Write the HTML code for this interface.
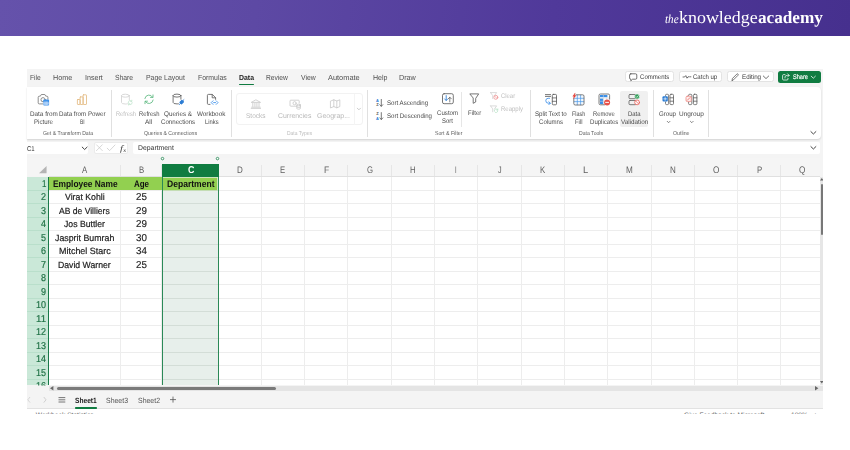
<!DOCTYPE html>
<html lang="en"><head><meta charset="utf-8"><title>Excel Data Validation - The Knowledge Academy</title>
<style>
html,body{margin:0;padding:0;}
body{width:850px;height:450px;position:relative;overflow:hidden;background:#fff;font-family:"Liberation Sans",sans-serif;}
.t{position:absolute;white-space:nowrap;line-height:1;transform-origin:0 0;display:block;text-rendering:geometricPrecision;}
.a{position:absolute;display:block;}
#hdr{left:0;top:0;width:850px;height:36.2px;background:linear-gradient(97deg,#6552ab 0%,#5d49a4 30%,#50399a 65%,#46308e 100%);}
#app{left:27px;top:69px;width:796.5px;height:345px;background:#f4f4f4;overflow:hidden;}
#ribbon{left:27px;top:87.3px;width:794px;height:51.7px;background:#fff;border-radius:0 4px 4px 0;box-shadow:0 1.2px 2px -0.3px rgba(0,0,0,.14);}
.sep{position:absolute;width:1px;background:#e0e0e0;}
.btn{position:absolute;background:#fff;border:0.6px solid #e3e3e3;border-radius:2.5px;box-sizing:border-box;}
svg{position:absolute;overflow:visible;}
#txt{position:absolute;left:0;top:0;width:850px;height:450px;will-change:transform;}

</style></head>
<body>
<div class="a" id="hdr"></div>
<div class="a" id="app"></div>
<div class="a" id="ribbon"></div>
<!-- tab underline -->
<div class="a" style="left:239px;top:83.5px;width:15px;height:1.7px;background:#107c41;border-radius:1px"></div>
<!-- ribbon separators -->
<div class="sep" style="left:111px;top:90px;height:47px"></div>
<div class="sep" style="left:230.5px;top:90px;height:47px"></div>
<div class="sep" style="left:367px;top:90px;height:47px"></div>
<div class="sep" style="left:461px;top:91.5px;height:35px;background:#e6e6e6"></div>
<div class="sep" style="left:529.5px;top:90px;height:47px"></div>
<div class="sep" style="left:652.7px;top:90px;height:47px"></div>
<div class="sep" style="left:708px;top:90px;height:47px"></div>
<!-- data types gallery -->
<div class="a" style="left:235.5px;top:93px;width:127px;height:32px;border:0.7px solid #f2f2f2;border-radius:3px;box-sizing:border-box"></div>
<div class="a" style="left:354px;top:93.5px;width:0.7px;height:31px;background:#f4f4f4"></div>
<!-- data validation hover -->
<div class="a" style="left:620px;top:90.7px;width:28.3px;height:36.6px;background:#f0f0f0;border-radius:2px"></div>
<!-- top right buttons -->
<div class="btn" style="left:625px;top:71.3px;width:48.5px;height:11.2px"></div>
<div class="btn" style="left:678.7px;top:71.3px;width:43.5px;height:11.2px"></div>
<div class="btn" style="left:727px;top:71.3px;width:46.5px;height:11.2px"></div>
<div class="a" style="left:777.8px;top:71px;width:43px;height:11.8px;background:#107c41;border-radius:2.5px"></div>
<!-- formula bar -->
<div class="a" style="left:27px;top:142.1px;width:61.2px;height:11.9px;background:#fff;border-radius:0 2px 2px 0"></div>
<div class="a" style="left:93.6px;top:142.1px;width:34.4px;height:11.9px;background:#fff;border-radius:2px;border:0.5px solid #ebebeb;box-sizing:border-box"></div>
<div class="a" style="left:133.3px;top:142.1px;width:687px;height:11.9px;background:#fff;border-radius:2px"></div>

<div class="a" style="left:48.50px;top:176.90px;width:771.10px;height:208.60px;background:#fff;"></div>
<div class="a" style="left:27.00px;top:157.70px;width:792.60px;height:18.70px;background:#f5f5f5;"></div>
<div class="a" style="left:27.00px;top:176.90px;width:21.50px;height:208.60px;background:#cae8d8;"></div>
<div class="a" style="left:48.50px;top:189.90px;width:771.10px;height:1.00px;background:#ededed;"></div>
<div class="a" style="left:27.00px;top:189.90px;width:21.50px;height:1.00px;background:#b9dfcb;"></div>
<div class="a" style="left:48.50px;top:203.40px;width:771.10px;height:1.00px;background:#ededed;"></div>
<div class="a" style="left:27.00px;top:203.40px;width:21.50px;height:1.00px;background:#b9dfcb;"></div>
<div class="a" style="left:48.50px;top:216.90px;width:771.10px;height:1.00px;background:#ededed;"></div>
<div class="a" style="left:27.00px;top:216.90px;width:21.50px;height:1.00px;background:#b9dfcb;"></div>
<div class="a" style="left:48.50px;top:230.40px;width:771.10px;height:1.00px;background:#ededed;"></div>
<div class="a" style="left:27.00px;top:230.40px;width:21.50px;height:1.00px;background:#b9dfcb;"></div>
<div class="a" style="left:48.50px;top:243.90px;width:771.10px;height:1.00px;background:#ededed;"></div>
<div class="a" style="left:27.00px;top:243.90px;width:21.50px;height:1.00px;background:#b9dfcb;"></div>
<div class="a" style="left:48.50px;top:257.40px;width:771.10px;height:1.00px;background:#ededed;"></div>
<div class="a" style="left:27.00px;top:257.40px;width:21.50px;height:1.00px;background:#b9dfcb;"></div>
<div class="a" style="left:48.50px;top:270.90px;width:771.10px;height:1.00px;background:#ededed;"></div>
<div class="a" style="left:27.00px;top:270.90px;width:21.50px;height:1.00px;background:#b9dfcb;"></div>
<div class="a" style="left:48.50px;top:284.40px;width:771.10px;height:1.00px;background:#ededed;"></div>
<div class="a" style="left:27.00px;top:284.40px;width:21.50px;height:1.00px;background:#b9dfcb;"></div>
<div class="a" style="left:48.50px;top:297.90px;width:771.10px;height:1.00px;background:#ededed;"></div>
<div class="a" style="left:27.00px;top:297.90px;width:21.50px;height:1.00px;background:#b9dfcb;"></div>
<div class="a" style="left:48.50px;top:311.40px;width:771.10px;height:1.00px;background:#ededed;"></div>
<div class="a" style="left:27.00px;top:311.40px;width:21.50px;height:1.00px;background:#b9dfcb;"></div>
<div class="a" style="left:48.50px;top:324.90px;width:771.10px;height:1.00px;background:#ededed;"></div>
<div class="a" style="left:27.00px;top:324.90px;width:21.50px;height:1.00px;background:#b9dfcb;"></div>
<div class="a" style="left:48.50px;top:338.40px;width:771.10px;height:1.00px;background:#ededed;"></div>
<div class="a" style="left:27.00px;top:338.40px;width:21.50px;height:1.00px;background:#b9dfcb;"></div>
<div class="a" style="left:48.50px;top:351.90px;width:771.10px;height:1.00px;background:#ededed;"></div>
<div class="a" style="left:27.00px;top:351.90px;width:21.50px;height:1.00px;background:#b9dfcb;"></div>
<div class="a" style="left:48.50px;top:365.40px;width:771.10px;height:1.00px;background:#ededed;"></div>
<div class="a" style="left:27.00px;top:365.40px;width:21.50px;height:1.00px;background:#b9dfcb;"></div>
<div class="a" style="left:48.50px;top:378.90px;width:771.10px;height:1.00px;background:#ededed;"></div>
<div class="a" style="left:27.00px;top:378.90px;width:21.50px;height:1.00px;background:#b9dfcb;"></div>
<div class="a" style="left:120.00px;top:176.90px;width:1.00px;height:208.60px;background:#ededed;"></div>
<div class="a" style="left:120.00px;top:165.20px;width:1.00px;height:11.20px;background:#e6e6e6;"></div>
<div class="a" style="left:161.20px;top:176.90px;width:1.00px;height:208.60px;background:#ededed;"></div>
<div class="a" style="left:161.20px;top:165.20px;width:1.00px;height:11.20px;background:#e6e6e6;"></div>
<div class="a" style="left:218.10px;top:176.90px;width:1.00px;height:208.60px;background:#ededed;"></div>
<div class="a" style="left:218.10px;top:165.20px;width:1.00px;height:11.20px;background:#e6e6e6;"></div>
<div class="a" style="left:260.80px;top:176.90px;width:1.00px;height:208.60px;background:#ededed;"></div>
<div class="a" style="left:260.80px;top:165.20px;width:1.00px;height:11.20px;background:#e6e6e6;"></div>
<div class="a" style="left:304.10px;top:176.90px;width:1.00px;height:208.60px;background:#ededed;"></div>
<div class="a" style="left:304.10px;top:165.20px;width:1.00px;height:11.20px;background:#e6e6e6;"></div>
<div class="a" style="left:347.40px;top:176.90px;width:1.00px;height:208.60px;background:#ededed;"></div>
<div class="a" style="left:347.40px;top:165.20px;width:1.00px;height:11.20px;background:#e6e6e6;"></div>
<div class="a" style="left:390.70px;top:176.90px;width:1.00px;height:208.60px;background:#ededed;"></div>
<div class="a" style="left:390.70px;top:165.20px;width:1.00px;height:11.20px;background:#e6e6e6;"></div>
<div class="a" style="left:434.00px;top:176.90px;width:1.00px;height:208.60px;background:#ededed;"></div>
<div class="a" style="left:434.00px;top:165.20px;width:1.00px;height:11.20px;background:#e6e6e6;"></div>
<div class="a" style="left:477.30px;top:176.90px;width:1.00px;height:208.60px;background:#ededed;"></div>
<div class="a" style="left:477.30px;top:165.20px;width:1.00px;height:11.20px;background:#e6e6e6;"></div>
<div class="a" style="left:520.60px;top:176.90px;width:1.00px;height:208.60px;background:#ededed;"></div>
<div class="a" style="left:520.60px;top:165.20px;width:1.00px;height:11.20px;background:#e6e6e6;"></div>
<div class="a" style="left:563.90px;top:176.90px;width:1.00px;height:208.60px;background:#ededed;"></div>
<div class="a" style="left:563.90px;top:165.20px;width:1.00px;height:11.20px;background:#e6e6e6;"></div>
<div class="a" style="left:607.20px;top:176.90px;width:1.00px;height:208.60px;background:#ededed;"></div>
<div class="a" style="left:607.20px;top:165.20px;width:1.00px;height:11.20px;background:#e6e6e6;"></div>
<div class="a" style="left:650.50px;top:176.90px;width:1.00px;height:208.60px;background:#ededed;"></div>
<div class="a" style="left:650.50px;top:165.20px;width:1.00px;height:11.20px;background:#e6e6e6;"></div>
<div class="a" style="left:693.80px;top:176.90px;width:1.00px;height:208.60px;background:#ededed;"></div>
<div class="a" style="left:693.80px;top:165.20px;width:1.00px;height:11.20px;background:#e6e6e6;"></div>
<div class="a" style="left:737.10px;top:176.90px;width:1.00px;height:208.60px;background:#ededed;"></div>
<div class="a" style="left:737.10px;top:165.20px;width:1.00px;height:11.20px;background:#e6e6e6;"></div>
<div class="a" style="left:780.40px;top:176.90px;width:1.00px;height:208.60px;background:#ededed;"></div>
<div class="a" style="left:780.40px;top:165.20px;width:1.00px;height:11.20px;background:#e6e6e6;"></div>
<div class="a" style="left:48.50px;top:175.80px;width:771.10px;height:0.90px;background:#e0e0e0;"></div>
<div class="a" style="left:49.30px;top:176.90px;width:112.50px;height:13.20px;background:#92d050;"></div>
<div class="a" style="left:161.70px;top:176.90px;width:57.00px;height:208.60px;background:#e7efeb;"></div>
<div class="a" style="left:162.50px;top:189.90px;width:55.50px;height:1.00px;background:#d3ddd7;"></div>
<div class="a" style="left:162.50px;top:203.40px;width:55.50px;height:1.00px;background:#d3ddd7;"></div>
<div class="a" style="left:162.50px;top:216.90px;width:55.50px;height:1.00px;background:#d3ddd7;"></div>
<div class="a" style="left:162.50px;top:230.40px;width:55.50px;height:1.00px;background:#d3ddd7;"></div>
<div class="a" style="left:162.50px;top:243.90px;width:55.50px;height:1.00px;background:#d3ddd7;"></div>
<div class="a" style="left:162.50px;top:257.40px;width:55.50px;height:1.00px;background:#d3ddd7;"></div>
<div class="a" style="left:162.50px;top:270.90px;width:55.50px;height:1.00px;background:#d3ddd7;"></div>
<div class="a" style="left:162.50px;top:284.40px;width:55.50px;height:1.00px;background:#d3ddd7;"></div>
<div class="a" style="left:162.50px;top:297.90px;width:55.50px;height:1.00px;background:#d3ddd7;"></div>
<div class="a" style="left:162.50px;top:311.40px;width:55.50px;height:1.00px;background:#d3ddd7;"></div>
<div class="a" style="left:162.50px;top:324.90px;width:55.50px;height:1.00px;background:#d3ddd7;"></div>
<div class="a" style="left:162.50px;top:338.40px;width:55.50px;height:1.00px;background:#d3ddd7;"></div>
<div class="a" style="left:162.50px;top:351.90px;width:55.50px;height:1.00px;background:#d3ddd7;"></div>
<div class="a" style="left:162.50px;top:365.40px;width:55.50px;height:1.00px;background:#d3ddd7;"></div>
<div class="a" style="left:162.50px;top:378.90px;width:55.50px;height:1.00px;background:#d3ddd7;"></div>
<div class="a" style="left:163.20px;top:177.70px;width:54.30px;height:12.10px;background:#92d050;box-shadow:0 0 0 0.6px #b9dda0;"></div>
<div class="a" style="left:161.70px;top:164.00px;width:57.00px;height:13.10px;background:#107c41;"></div>
<div class="a" style="left:161.70px;top:176.60px;width:1.40px;height:208.90px;background:#2a8957;"></div>
<div class="a" style="left:217.50px;top:176.60px;width:1.40px;height:208.90px;background:#2a8957;"></div>
<div class="a" style="left:47.90px;top:176.90px;width:1.30px;height:208.60px;background:#1a7a4a;"></div>
<svg style="left:158px;top:155px" width="64" height="8" viewBox="158 155 64 8"><circle cx="162.5" cy="158.6" r="1.25" fill="#fff" stroke="#2e8b5a" stroke-width="0.9"/><circle cx="217.5" cy="158.6" r="1.25" fill="#fff" stroke="#2e8b5a" stroke-width="0.9"/></svg>
<svg style="left:38.7px;top:166.2px" width="7.6" height="7.2" viewBox="0 0 7.6 7.2"><path d="M7.6 0V7.2H0Z" fill="#b4b4b4"/></svg>
<div class="a" style="left:27.00px;top:385.50px;width:796.20px;height:5.70px;background:#e4e4e4;"></div>
<div class="a" style="left:27.00px;top:385.50px;width:21.50px;height:5.70px;background:#f4f4f4;"></div>
<div class="a" style="left:56.50px;top:386.80px;width:219.00px;height:3.30px;background:#7a7a7a;border-radius:1.6px;"></div>
<svg style="left:50.4px;top:386.2px" width="3.4" height="4.6" viewBox="0 0 3.4 4.6"><path d="M3.4 0V4.6L0 2.3Z" fill="#666"/></svg>
<svg style="left:814.8px;top:386.2px" width="3.4" height="4.6" viewBox="0 0 3.4 4.6"><path d="M0 0V4.6L3.4 2.3Z" fill="#666"/></svg>
<div class="a" style="left:819.60px;top:176.90px;width:3.60px;height:208.60px;background:#e6e6e6;"></div>
<div class="a" style="left:820.50px;top:183.60px;width:2.70px;height:51.40px;background:#777;border-radius:1.3px;"></div>
<svg style="left:819.8px;top:178.3px" width="3.6" height="2.6" viewBox="0 0 3.6 2.6"><path d="M0 2.6H3.6L1.8 0Z" fill="#666"/></svg>
<svg style="left:819.8px;top:380.6px" width="3.6" height="2.6" viewBox="0 0 3.6 2.6"><path d="M0 0H3.6L1.8 2.6Z" fill="#666"/></svg>
<div class="a" style="left:27.00px;top:408.30px;width:796.50px;height:0.70px;background:#e2e2e2;"></div>
<div class="a" style="left:27.00px;top:409.00px;width:796.50px;height:5.00px;background:#fff;"></div>
<div class="a" style="left:75.00px;top:407.20px;width:21.70px;height:1.60px;background:#107c41;border-radius:0.8px;"></div>
<svg style="left:27px;top:396px" width="150" height="8" viewBox="27 396 150 8" fill="none" stroke-linecap="round"><path d="M29.8 397.3L27.8 399.8L29.8 402.3" stroke="#c8c8c8" stroke-width="0.7"/><path d="M44 397.3L46 399.8L44 402.3" stroke="#c0c0c0" stroke-width="0.7"/><path d="M58.9 397.6H64.9M58.9 399.8H64.9M58.9 402H64.9" stroke="#555" stroke-width="0.8"/><path d="M170.4 399.6H175.6M173 397V402.2" stroke="#555" stroke-width="0.8"/></svg>
<div class="a" style="left:27px;top:409px;width:796.5px;height:5px;overflow:hidden"><span class="t" style="left:8.8px;top:3.7px;font-size:6.6px;color:#666">Workbook Statistics</span><span class="t" style="left:657px;top:3.7px;font-size:6.6px;color:#666">Give Feedback to Microsoft</span><span class="t" style="left:764px;top:3.7px;font-size:6.6px;color:#666">100%</span><span class="t" style="left:786.5px;top:3.7px;font-size:6.6px;color:#666">+</span></div>
<div class="a" style="left:0.00px;top:414.00px;width:850.00px;height:36.00px;background:#fff;"></div>
<div class="a" style="left:823.20px;top:36.00px;width:26.80px;height:414.00px;background:#fff;"></div>
<svg style="left:0;top:0" width="850" height="450" viewBox="0 0 850 450" fill="none" stroke-linecap="round" stroke-linejoin="round">
<!-- camera + table badge -->
<g stroke="#7a7a7a" stroke-width="0.85">
<path d="M42.8 103.9H39.3Q38.2 103.9 38.2 102.8V97.3Q38.2 96.2 39.3 96.2H40.3L41.3 94.5H44.8L45.8 96.2H46.8Q47.9 96.2 47.9 97.3V99.2"/>
<circle cx="43.05" cy="99.7" r="2.1"/>
</g>
<rect x="43.2" y="99.6" width="5.9" height="5.9" rx="1" fill="#3f92e9"/>
<path d="M44.1 102H48.2V104.6H44.1ZM46.15 102V104.6M44.1 103.3H48.2" stroke="#cfe4fb" stroke-width="0.55" fill="#7fb6f1"/>
<!-- power bi -->
<g stroke="#e2b77c" stroke-width="0.8">
<rect x="77.4" y="99.5" width="2.7" height="5" rx="0.5"/>
<rect x="80.1" y="96.9" width="3" height="7.6" rx="0.5"/>
<rect x="83.1" y="94.8" width="3.4" height="9.7" rx="0.5"/>
</g>
<!-- refresh (disabled) -->
<g stroke="#d2d2d2" stroke-width="0.85">
<ellipse cx="125.4" cy="95.7" rx="3.9" ry="1.5"/>
<path d="M121.5 95.7V102.5Q121.5 104 125.4 104Q126.6 104 127.4 103.8M129.3 95.7V100"/>
</g>
<g stroke="#bfe3cb" stroke-width="0.8"><path d="M128.2 102.6A2 2 0 0 1 131.6 101.2M132.2 102.6A2 2 0 0 1 128.8 104"/><path d="M131.8 100.2V101.4H130.6M128.6 105V103.8H129.8"/></g>
<!-- refresh all -->
<g stroke="#5cb880" stroke-width="0.85">
<path d="M144.86 98.57A4.2 4.2 0 0 1 152.64 97.2"/>
<path d="M153.14 100.03A4.2 4.2 0 0 1 145.36 101.4"/>
<path d="M153 94.9V97.4H150.5M145 103.7V101.2H147.5"/>
</g>
<!-- queries & connections -->
<g stroke="#5f5f5f" stroke-width="0.85">
<ellipse cx="177" cy="95.6" rx="3.9" ry="1.5"/>
<path d="M173.1 95.6V102.4Q173.1 103.9 177 103.9Q177.8 103.9 178.4 103.8M180.9 95.6V99.2"/>
</g>
<path d="M179.3 104.6L180.6 103.3M183.9 99.7L182.6 101" stroke="#2b7cd3" stroke-width="0.9"/>
<path d="M179.9 102.3L181.9 100.3L183.5 101.9L181.5 103.9Z" fill="#2b7cd3" stroke="#2b7cd3" stroke-width="1.1"/>
<!-- workbook links -->
<g stroke="#5f5f5f" stroke-width="0.85">
<path d="M210 104.4H208.4Q207.4 104.4 207.4 103.4V95.4Q207.4 94.4 208.4 94.4H212.3L215.6 97.7V99.4"/>
<path d="M212.2 94.6V97.8H215.4"/>
</g>
<g stroke="#3b8fe8" stroke-width="0.85"><path d="M213 100.8L211.2 102.6L213 104.4M216.2 100.8L218 102.6L216.2 104.4M213.6 102.6H215.6"/></g>
<!-- stocks (bank) -->
<g stroke="#c6c6c6" stroke-width="0.8">
<path d="M251.6 102.2L255.9 99.8L260.2 102.2ZM252.8 103.2V106.4M254.9 103.2V106.4M256.9 103.2V106.4M259 103.2V106.4M251.6 107.2H260.2M251.2 108.4H260.6"/>
</g>
<!-- currencies -->
<g stroke="#c6c6c6" stroke-width="0.8">
<path d="M296.5 106.2H290.8Q290 106.2 290 105.4V101Q290 100.2 290.8 100.2H298.4Q299.2 100.2 299.2 101V103"/>
<circle cx="294.6" cy="103.2" r="1.6"/>
<ellipse cx="298.6" cy="105" rx="1.8" ry="0.8"/>
<path d="M296.8 105V108.4Q296.8 109.2 298.6 109.2Q300.4 109.2 300.4 108.4V105M296.8 106.7Q296.8 107.5 298.6 107.5Q300.4 107.5 300.4 106.7"/>
</g>
<!-- geography (map) -->
<g stroke="#c6c6c6" stroke-width="0.8">
<path d="M330.8 101L333.8 99.8L336.8 101L339.8 99.8V106.6L336.8 107.8L333.8 106.6L330.8 107.8ZM333.8 99.8V106.6M336.8 101V107.8"/>
</g>
<path d="M357.3 108.2L358.9 109.8L360.5 108.2" stroke="#b4b4b4" stroke-width="0.7"/>
<!-- sort asc / desc arrows -->
<g stroke="#555" stroke-width="0.8">
<path d="M381.3 99.4V106.2M379.8 104.7L381.3 106.3L382.8 104.7"/>
<path d="M381.3 112.6V119.4M379.8 117.9L381.3 119.5L382.8 117.9"/>
</g>
<!-- custom sort -->
<rect x="442.5" y="93.7" width="10.8" height="10" rx="1.6" stroke="#5f5f5f" stroke-width="0.85"/>
<path d="M446.2 95.6V100.4M444.6 98.9L446.2 100.5L447.8 98.9" stroke="#2b7cd3" stroke-width="0.85"/>
<path d="M449.8 101.9V97.3M448.3 98.8L449.8 97.2L451.3 98.8" stroke="#6a6a6a" stroke-width="0.85"/>
<!-- filter -->
<path d="M470.2 93.9H478.7L475.7 98.4V102L473.2 103.3V98.4Z" stroke="#5f5f5f" stroke-width="0.85"/>
<!-- clear (disabled) -->
<path d="M490.6 92.6H496.6L494.5 95.6V97.2M492.7 98.6V95.6L490.6 92.6" stroke="#d0d0d0" stroke-width="0.8"/>
<circle cx="495.8" cy="97.3" r="2" fill="#fff" stroke="#f09a9a" stroke-width="0.85"/><path d="M494.6 96.1L497 98.5" stroke="#f09a9a" stroke-width="0.7"/>
<!-- reapply (disabled) -->
<path d="M490.6 105.9H496.6L494.5 108.9M492.7 111.8V108.9L490.6 105.9" stroke="#d0d0d0" stroke-width="0.8"/>
<path d="M494.3 110.6A1.8 1.8 0 0 1 497.6 109.8M497.8 110.9A1.8 1.8 0 0 1 494.5 111.7M497.8 108.9V110H496.7" stroke="#b5e0c4" stroke-width="0.75"/>
<!-- split text to columns -->
<path d="M545.4 94.6H550.6M545.4 96.4H550.6" stroke="#5f5f5f" stroke-width="0.85"/>
<path d="M549.6 98.3H548.2Q545.8 98.3 545.8 100.7Q545.8 103.2 548.4 103.2H550.2M548.8 101.7L550.3 103.2L548.8 104.7" stroke="#3b8fe8" stroke-width="0.85"/>
<rect x="552.3" y="94.4" width="4.2" height="10.4" rx="1" stroke="#5f5f5f" stroke-width="0.85"/>
<path d="M552.3 97.9H556.5M552.3 101.3H556.5" stroke="#5f5f5f" stroke-width="0.8"/>
<!-- flash fill -->
<rect x="574" y="95" width="10" height="9.8" rx="1.2" fill="#f3f8fe"/>
<path d="M574.2 98.3H583.8M574.2 101.6H583.8M577.3 95.2V104.8M580.6 95.2V104.8" stroke="#4798ea" stroke-width="0.7"/>
<path d="M576 94.8H582.6Q584 94.8 584 96.2V103.6Q584 105 582.6 105H575.2Q573.8 105 573.8 103.6V98.6" stroke="#666" stroke-width="0.85"/>
<path d="M575 93.3L572.8 96.3H574.1L573.4 98.6L576 95.4H574.5Z" fill="#e5352b" stroke="#e5352b" stroke-width="0.4"/>
<!-- remove duplicates -->
<rect x="599" y="94" width="10.6" height="10.8" rx="1.3" fill="#fff"/>
<rect x="600" y="95" width="7.4" height="2.2" fill="#3b8fe8"/>
<rect x="600" y="98.5" width="3.2" height="5.6" fill="#3b8fe8"/>
<path d="M599.4 98H609.4M599.4 101.3H605M603.4 94.4V104.6M606.6 97.4V100" stroke="#cfd6de" stroke-width="0.55"/>
<path d="M604.6 104.8H600.4Q599 104.8 599 103.4V95.4Q599 94 600.4 94H608.2Q609.6 94 609.6 95.4V99.2" stroke="#666" stroke-width="0.85"/>
<circle cx="607.1" cy="102.4" r="3" fill="#e8524a"/>
<path d="M605.6 102.4H608.6" stroke="#fff" stroke-width="0.95"/>
<!-- data validation -->
<rect x="629" y="94.5" width="7.2" height="4.2" rx="1" stroke="#666" stroke-width="0.85"/>
<rect x="629" y="100.5" width="7.2" height="4.2" rx="1" stroke="#666" stroke-width="0.85"/>
<circle cx="637.1" cy="96.5" r="2.5" fill="#2f9e58" stroke="#f0f0f0" stroke-width="0.5"/>
<path d="M636 96.6L636.8 97.4L638.3 95.7" stroke="#fff" stroke-width="0.65"/>
<circle cx="637.1" cy="102.4" r="2.4" fill="#fff" stroke="#ea6a63" stroke-width="0.9"/>
<path d="M635.6 100.9L638.6 103.9" stroke="#ea6a63" stroke-width="0.8"/>
<!-- group -->
<g stroke="#666" stroke-width="0.85">
<path d="M665.5 96V95.3Q665.5 94.3 666.5 94.3H667.6Q668.6 94.3 668.6 95.3V103.6Q668.6 104.6 667.6 104.6H666.5Q665.5 104.6 665.5 103.6V102"/>
<rect x="670" y="94.3" width="3.5" height="10.3" rx="1"/>
<path d="M670 97.8H673.5M670 101.2H673.5"/>
</g>
<rect x="662.5" y="96.2" width="5.3" height="5.4" rx="1" fill="#2b7cd3"/>
<path d="M663.8 98.9H666.5M665.15 97.55V100.25" stroke="#fff" stroke-width="0.7"/>
<!-- ungroup -->
<g stroke="#666" stroke-width="0.85">
<path d="M688.6 96V95.3Q688.6 94.3 689.6 94.3H690.8Q691.8 94.3 691.8 95.3V103.6Q691.8 104.6 690.8 104.6H689.6Q688.6 104.6 688.6 103.6V102"/>
<rect x="693.4" y="94.3" width="3.5" height="10.3" rx="1"/>
<path d="M693.4 97.8H696.9M693.4 101.2H696.9"/>
</g>
<rect x="686" y="96.2" width="5.3" height="5.4" rx="1.3" fill="#fdeeee" stroke="#ee8a84" stroke-width="0.8"/>
<path d="M687.3 100.3L690 97.6" stroke="#ee6a64" stroke-width="0.8"/>
<path d="M667.2 121.3L668.6 122.7L670 121.3M690.4 121.3L691.8 122.7L693.2 121.3" stroke="#555" stroke-width="0.7"/>
<!-- ribbon collapse / formula expand chevrons -->
<path d="M810.9 131.6L813.4 134L815.9 131.6M810.9 146.6L813.4 149L815.9 146.6" stroke="#3a3a3a" stroke-width="0.95"/>
<!-- top right buttons -->
<path d="M630.8 73.8H635.6Q636.8 73.8 636.8 75V78Q636.8 79.2 635.6 79.2H632.6L630.8 80.8V79.2Q629.6 79.2 629.6 78V75Q629.6 73.8 630.8 73.8Z" stroke="#444" stroke-width="0.75"/>
<path d="M683 77H684.6L685.8 75.6L687 78.2L688 76.8H689.4M690.4 76.8H690.9" stroke="#444" stroke-width="0.75"/>
<path d="M732 80.4L732.5 78.4L736.8 74.1Q737.4 73.5 738 74.1Q738.6 74.7 738 75.3L733.7 79.6Z" stroke="#444" stroke-width="0.7"/>
<path d="M763.3 76L766 78.6L768.7 76" stroke="#444" stroke-width="0.75"/>
<path d="M785 74.6H783.6Q782.6 74.6 782.6 75.6V79Q782.6 80 783.6 80H787Q788 80 788 79V78.4M785 78V77Q785 75.4 787.4 75.4H789M787.6 73.8L789.2 75.4L787.6 77" stroke="#fff" stroke-width="0.75"/>
<path d="M811.2 76.2L813.3 78.2L815.4 76.2" stroke="#fff" stroke-width="0.75"/>
<!-- formula bar icons -->
<path d="M82.2 147.1L84.65 149.5L87.1 147.1" stroke="#3a3a3a" stroke-width="0.95"/>
<path d="M96.5 144.8L102.3 150.6M102.3 144.8L96.5 150.6" stroke="#c6c6c6" stroke-width="0.7"/>
<path d="M107.2 148.2L109.6 150.6L115 145" stroke="#c6c6c6" stroke-width="0.7"/>
<!-- tiny A/Z glyphs of sort icons -->
<g font-family="'Liberation Sans',sans-serif" font-weight="700" font-size="3.9" stroke="none">
<text x="376" y="102.2" fill="#2b7cd3">A</text><text x="376.2" y="106.3" fill="#555">Z</text>
<text x="376.2" y="115.4" fill="#555">Z</text><text x="376" y="119.8" fill="#2b7cd3">A</text>
</g>
</svg>

<div id="txt">
<span class="t" style="left:665.00px;top:13px;font-size:12.4px;color:#fff;font-family:'Liberation Serif', serif;font-style:italic;transform:scaleX(0.8982);">the</span>
<span class="t" style="left:678.80px;top:9px;font-size:17.2px;color:#fff;font-family:'Liberation Serif', serif;transform:scaleX(1.0435);">knowledge</span>
<span class="t" style="left:757.80px;top:9px;font-size:17.2px;color:#fff;font-weight:700;font-family:'Liberation Serif', serif;transform:scaleX(0.9997);">academy</span>
<span class="t" style="left:30.00px;top:74px;font-size:7.4px;color:#505050;transform:scaleX(0.9059);">File</span>
<span class="t" style="left:53.30px;top:74px;font-size:7.4px;color:#505050;transform:scaleX(0.9737);">Home</span>
<span class="t" style="left:85.00px;top:74px;font-size:7.4px;color:#505050;transform:scaleX(0.9630);">Insert</span>
<span class="t" style="left:115.00px;top:74px;font-size:7.4px;color:#505050;transform:scaleX(0.9121);">Share</span>
<span class="t" style="left:145.80px;top:74px;font-size:7.4px;color:#505050;transform:scaleX(0.9370);">Page Layout</span>
<span class="t" style="left:197.50px;top:74px;font-size:7.4px;color:#505050;transform:scaleX(0.9347);">Formulas</span>
<span class="t" style="left:266.00px;top:74px;font-size:7.4px;color:#505050;transform:scaleX(0.8995);">Review</span>
<span class="t" style="left:300.80px;top:74px;font-size:7.4px;color:#505050;transform:scaleX(0.9251);">View</span>
<span class="t" style="left:328.30px;top:74px;font-size:7.4px;color:#505050;transform:scaleX(1.0019);">Automate</span>
<span class="t" style="left:372.50px;top:74px;font-size:7.4px;color:#505050;transform:scaleX(0.9538);">Help</span>
<span class="t" style="left:399.00px;top:74px;font-size:7.4px;color:#505050;transform:scaleX(0.9739);">Draw</span>
<span class="t" style="left:238.80px;top:74px;font-size:7.4px;color:#222;font-weight:700;transform:scaleX(0.9357);">Data</span>
<span class="t" style="left:639.70px;top:75px;font-size:6.7px;color:#3a3a3a;transform:scaleX(0.9059);">Comments</span>
<span class="t" style="left:693.30px;top:75px;font-size:6.7px;color:#3a3a3a;transform:scaleX(0.9036);">Catch up</span>
<span class="t" style="left:741.70px;top:75px;font-size:6.7px;color:#3a3a3a;transform:scaleX(0.9338);">Editing</span>
<span class="t" style="left:793.00px;top:75px;font-size:6.7px;color:#fff;-webkit-text-stroke:0.15px #fff;transform:scaleX(0.8399);">Share</span>
<span class="t" style="left:29.70px;top:112px;font-size:6.7px;color:#4a4a4a;transform:scaleX(0.9469);">Data from</span>
<span class="t" style="left:34.00px;top:120px;font-size:6.7px;color:#4a4a4a;transform:scaleX(0.9122);">Picture</span>
<span class="t" style="left:59.00px;top:112px;font-size:6.7px;color:#4a4a4a;transform:scaleX(0.9265);">Data from Power</span>
<span class="t" style="left:80.00px;top:120px;font-size:6.7px;color:#4a4a4a;transform:scaleX(0.7427);">BI</span>
<span class="t" style="left:116.30px;top:112px;font-size:6.7px;color:#bdbdbd;transform:scaleX(0.8539);">Refresh</span>
<span class="t" style="left:138.70px;top:112px;font-size:6.7px;color:#4a4a4a;transform:scaleX(0.8753);">Refresh</span>
<span class="t" style="left:145.30px;top:120px;font-size:6.7px;color:#4a4a4a;transform:scaleX(0.9681);">All</span>
<span class="t" style="left:164.00px;top:112px;font-size:6.7px;color:#4a4a4a;transform:scaleX(0.9412);">Queries &amp;</span>
<span class="t" style="left:160.80px;top:120px;font-size:6.7px;color:#4a4a4a;transform:scaleX(0.9197);">Connections</span>
<span class="t" style="left:197.00px;top:112px;font-size:6.7px;color:#4a4a4a;transform:scaleX(0.9438);">Workbook</span>
<span class="t" style="left:204.70px;top:120px;font-size:6.7px;color:#4a4a4a;transform:scaleX(0.8704);">Links</span>
<span class="t" style="left:245.80px;top:114px;font-size:6.9px;color:#b8b8b8;transform:scaleX(0.9426);">Stocks</span>
<span class="t" style="left:278.30px;top:114px;font-size:6.9px;color:#b8b8b8;transform:scaleX(1.0022);">Currencies</span>
<span class="t" style="left:317.00px;top:114px;font-size:6.9px;color:#b8b8b8;transform:scaleX(1.0134);">Geograp...</span>
<span class="t" style="left:386.70px;top:101px;font-size:6.7px;color:#4a4a4a;transform:scaleX(0.9137);">Sort Ascending</span>
<span class="t" style="left:386.70px;top:114px;font-size:6.7px;color:#4a4a4a;transform:scaleX(0.9100);">Sort Descending</span>
<span class="t" style="left:437.00px;top:111px;font-size:6.7px;color:#4a4a4a;transform:scaleX(0.9155);">Custom</span>
<span class="t" style="left:442.40px;top:119px;font-size:6.7px;color:#4a4a4a;transform:scaleX(0.8805);">Sort</span>
<span class="t" style="left:467.60px;top:111px;font-size:6.7px;color:#4a4a4a;transform:scaleX(0.8874);">Filter</span>
<span class="t" style="left:501.20px;top:94px;font-size:6.7px;color:#bdbdbd;transform:scaleX(0.8821);">Clear</span>
<span class="t" style="left:501.20px;top:107px;font-size:6.7px;color:#bdbdbd;transform:scaleX(0.8962);">Reapply</span>
<span class="t" style="left:535.00px;top:112px;font-size:6.7px;color:#4a4a4a;transform:scaleX(0.9201);">Split Text to</span>
<span class="t" style="left:539.00px;top:120px;font-size:6.7px;color:#4a4a4a;transform:scaleX(0.9094);">Columns</span>
<span class="t" style="left:571.70px;top:112px;font-size:6.7px;color:#4a4a4a;transform:scaleX(0.8130);">Flash</span>
<span class="t" style="left:575.00px;top:120px;font-size:6.7px;color:#4a4a4a;transform:scaleX(0.8775);">Fill</span>
<span class="t" style="left:593.30px;top:112px;font-size:6.7px;color:#4a4a4a;transform:scaleX(0.8713);">Remove</span>
<span class="t" style="left:590.00px;top:120px;font-size:6.7px;color:#4a4a4a;transform:scaleX(0.9061);">Duplicates</span>
<span class="t" style="left:627.50px;top:112px;font-size:6.7px;color:#4a4a4a;transform:scaleX(0.8840);">Data</span>
<span class="t" style="left:620.50px;top:120px;font-size:6.7px;color:#4a4a4a;transform:scaleX(0.9455);">Validation</span>
<span class="t" style="left:659.00px;top:112px;font-size:6.7px;color:#4a4a4a;transform:scaleX(0.9143);">Group</span>
<span class="t" style="left:679.00px;top:112px;font-size:6.7px;color:#4a4a4a;transform:scaleX(0.9666);">Ungroup</span>
<span class="t" style="left:42.50px;top:132px;font-size:5.8px;color:#5c5c5c;transform:scaleX(0.8867);">Get &amp; Transform Data</span>
<span class="t" style="left:144.00px;top:132px;font-size:5.8px;color:#5c5c5c;transform:scaleX(0.8889);">Queries &amp; Connections</span>
<span class="t" style="left:286.70px;top:132px;font-size:5.8px;color:#bbb;transform:scaleX(0.8556);">Data Types</span>
<span class="t" style="left:435.00px;top:132px;font-size:5.8px;color:#5c5c5c;transform:scaleX(0.8984);">Sort &amp; Filter</span>
<span class="t" style="left:579.00px;top:132px;font-size:5.8px;color:#5c5c5c;transform:scaleX(0.8792);">Data Tools</span>
<span class="t" style="left:672.50px;top:132px;font-size:5.8px;color:#5c5c5c;transform:scaleX(0.8980);">Outline</span>
<span class="t" style="left:27.30px;top:146px;font-size:7px;color:#333;transform:scaleX(0.8600);">C1</span>
<span class="t" style="left:138.00px;top:145px;font-size:7px;color:#333;transform:scaleX(0.9787);">Department</span>
<span class="t" style="left:119.60px;top:145px;font-size:8.4px;color:#444;font-family:'Liberation Serif', serif;font-style:italic;transform:scaleX(1.2886);">f</span>
<span class="t" style="left:122.60px;top:149px;font-size:5.6px;color:#444;font-family:'Liberation Serif', serif;font-style:italic;transform:scaleX(1.2881);">x</span>
<span class="t" style="left:81.90px;top:166px;font-size:9.5px;color:#606060;transform:scaleX(0.8197);">A</span>
<span class="t" style="left:138.50px;top:166px;font-size:9.5px;color:#606060;transform:scaleX(0.8197);">B</span>
<span class="t" style="left:187.60px;top:166px;font-size:9.9px;color:#fff;font-weight:700;transform:scaleX(0.8963);">C</span>
<span class="t" style="left:237.05px;top:166px;font-size:9.5px;color:#606060;transform:scaleX(0.8436);">D</span>
<span class="t" style="left:280.35px;top:166px;font-size:9.5px;color:#606060;transform:scaleX(0.8197);">E</span>
<span class="t" style="left:323.65px;top:166px;font-size:9.5px;color:#606060;transform:scaleX(0.8946);">F</span>
<span class="t" style="left:366.55px;top:166px;font-size:9.5px;color:#606060;transform:scaleX(0.8118);">G</span>
<span class="t" style="left:410.05px;top:166px;font-size:9.5px;color:#606060;transform:scaleX(0.8145);">H</span>
<span class="t" style="left:455.35px;top:166px;font-size:9.5px;color:#606060;transform:scaleX(0.6059);">I</span>
<span class="t" style="left:497.65px;top:166px;font-size:9.5px;color:#606060;transform:scaleX(0.7579);">J</span>
<span class="t" style="left:540.15px;top:166px;font-size:9.5px;color:#606060;transform:scaleX(0.8197);">K</span>
<span class="t" style="left:583.45px;top:166px;font-size:9.5px;color:#606060;transform:scaleX(0.9817);">L</span>
<span class="t" style="left:625.95px;top:166px;font-size:9.5px;color:#606060;transform:scaleX(0.8584);">M</span>
<span class="t" style="left:669.75px;top:166px;font-size:9.5px;color:#606060;transform:scaleX(0.8436);">N</span>
<span class="t" style="left:712.75px;top:166px;font-size:9.5px;color:#606060;transform:scaleX(0.8660);">O</span>
<span class="t" style="left:756.65px;top:166px;font-size:9.5px;color:#606060;transform:scaleX(0.8197);">P</span>
<span class="t" style="left:799.10px;top:166px;font-size:9.5px;color:#606060;transform:scaleX(0.8660);">Q</span>
<span class="t" style="left:41.50px;top:180px;font-size:10.0px;color:#1f7145;-webkit-text-stroke:0.2px #1f7145;transform:scaleX(0.7910);">1</span>
<span class="t" style="left:40.90px;top:193px;font-size:10.0px;color:#1f7145;-webkit-text-stroke:0.2px #1f7145;transform:scaleX(0.8989);">2</span>
<span class="t" style="left:40.90px;top:207px;font-size:10.0px;color:#1f7145;-webkit-text-stroke:0.2px #1f7145;transform:scaleX(0.8989);">3</span>
<span class="t" style="left:40.90px;top:220px;font-size:10.0px;color:#1f7145;-webkit-text-stroke:0.2px #1f7145;transform:scaleX(0.8989);">4</span>
<span class="t" style="left:40.90px;top:234px;font-size:10.0px;color:#1f7145;-webkit-text-stroke:0.2px #1f7145;transform:scaleX(0.8989);">5</span>
<span class="t" style="left:40.90px;top:247px;font-size:10.0px;color:#1f7145;-webkit-text-stroke:0.2px #1f7145;transform:scaleX(0.8989);">6</span>
<span class="t" style="left:40.90px;top:261px;font-size:10.0px;color:#1f7145;-webkit-text-stroke:0.2px #1f7145;transform:scaleX(0.8989);">7</span>
<span class="t" style="left:40.90px;top:274px;font-size:10.0px;color:#1f7145;-webkit-text-stroke:0.2px #1f7145;transform:scaleX(0.8989);">8</span>
<span class="t" style="left:40.90px;top:288px;font-size:10.0px;color:#1f7145;-webkit-text-stroke:0.2px #1f7145;transform:scaleX(0.8989);">9</span>
<span class="t" style="left:35.90px;top:301px;font-size:10.0px;color:#1f7145;-webkit-text-stroke:0.2px #1f7145;transform:scaleX(0.8989);">10</span>
<span class="t" style="left:35.90px;top:315px;font-size:10.0px;color:#1f7145;-webkit-text-stroke:0.2px #1f7145;transform:scaleX(0.9624);">11</span>
<span class="t" style="left:35.90px;top:328px;font-size:10.0px;color:#1f7145;-webkit-text-stroke:0.2px #1f7145;transform:scaleX(0.8989);">12</span>
<span class="t" style="left:35.90px;top:342px;font-size:10.0px;color:#1f7145;-webkit-text-stroke:0.2px #1f7145;transform:scaleX(0.8989);">13</span>
<span class="t" style="left:35.90px;top:355px;font-size:10.0px;color:#1f7145;-webkit-text-stroke:0.2px #1f7145;transform:scaleX(0.8989);">14</span>
<span class="t" style="left:35.90px;top:369px;font-size:10.0px;color:#1f7145;-webkit-text-stroke:0.2px #1f7145;transform:scaleX(0.8989);">15</span>
<span class="t" style="left:35.90px;top:382px;font-size:10.0px;color:#1f7145;-webkit-text-stroke:0.2px #1f7145;clip-path:inset(0 0 6.50px 0);transform:scaleX(0.8989);">16</span>
<span class="t" style="left:52.50px;top:180px;font-size:9.5px;color:#111;font-weight:700;transform:scaleX(0.8800);">Employee Name</span>
<span class="t" style="left:134.20px;top:180px;font-size:9.5px;color:#111;font-weight:700;transform:scaleX(0.8355);">Age</span>
<span class="t" style="left:166.65px;top:180px;font-size:9.5px;color:#111;font-weight:700;transform:scaleX(0.8997);">Department</span>
<span class="t" style="left:64.85px;top:193px;font-size:9.1px;color:#1c1c1c;-webkit-text-stroke:0.2px #1c1c1c;transform:scaleX(0.9613);">Virat Kohli</span>
<span class="t" style="left:136.45px;top:193px;font-size:10.0px;color:#1c1c1c;-webkit-text-stroke:0.15px #1c1c1c;transform:scaleX(0.9798);">25</span>
<span class="t" style="left:59.35px;top:207px;font-size:9.1px;color:#1c1c1c;-webkit-text-stroke:0.2px #1c1c1c;transform:scaleX(0.9402);">AB de Villiers</span>
<span class="t" style="left:136.45px;top:207px;font-size:10.0px;color:#1c1c1c;-webkit-text-stroke:0.15px #1c1c1c;transform:scaleX(0.9798);">29</span>
<span class="t" style="left:64.20px;top:220px;font-size:9.1px;color:#1c1c1c;-webkit-text-stroke:0.2px #1c1c1c;transform:scaleX(0.9542);">Jos Buttler</span>
<span class="t" style="left:136.45px;top:220px;font-size:10.0px;color:#1c1c1c;-webkit-text-stroke:0.15px #1c1c1c;transform:scaleX(0.9798);">29</span>
<span class="t" style="left:55.05px;top:234px;font-size:9.1px;color:#1c1c1c;-webkit-text-stroke:0.2px #1c1c1c;transform:scaleX(0.9696);">Jasprit Bumrah</span>
<span class="t" style="left:136.45px;top:234px;font-size:10.0px;color:#1c1c1c;-webkit-text-stroke:0.15px #1c1c1c;transform:scaleX(0.9798);">30</span>
<span class="t" style="left:58.85px;top:247px;font-size:9.1px;color:#1c1c1c;-webkit-text-stroke:0.2px #1c1c1c;transform:scaleX(0.9836);">Mitchel Starc</span>
<span class="t" style="left:136.45px;top:247px;font-size:10.0px;color:#1c1c1c;-webkit-text-stroke:0.15px #1c1c1c;transform:scaleX(0.9798);">34</span>
<span class="t" style="left:58.35px;top:261px;font-size:9.1px;color:#1c1c1c;-webkit-text-stroke:0.2px #1c1c1c;transform:scaleX(0.9536);">David Warner</span>
<span class="t" style="left:136.45px;top:261px;font-size:10.0px;color:#1c1c1c;-webkit-text-stroke:0.15px #1c1c1c;transform:scaleX(0.9798);">25</span>
<span class="t" style="left:75.00px;top:397px;font-size:7.6px;color:#222;font-weight:700;transform:scaleX(0.8713);">Sheet1</span>
<span class="t" style="left:106.00px;top:397px;font-size:7.6px;color:#555;transform:scaleX(0.9137);">Sheet3</span>
<span class="t" style="left:138.00px;top:397px;font-size:7.6px;color:#555;transform:scaleX(0.9137);">Sheet2</span>
</div>
</body></html>
